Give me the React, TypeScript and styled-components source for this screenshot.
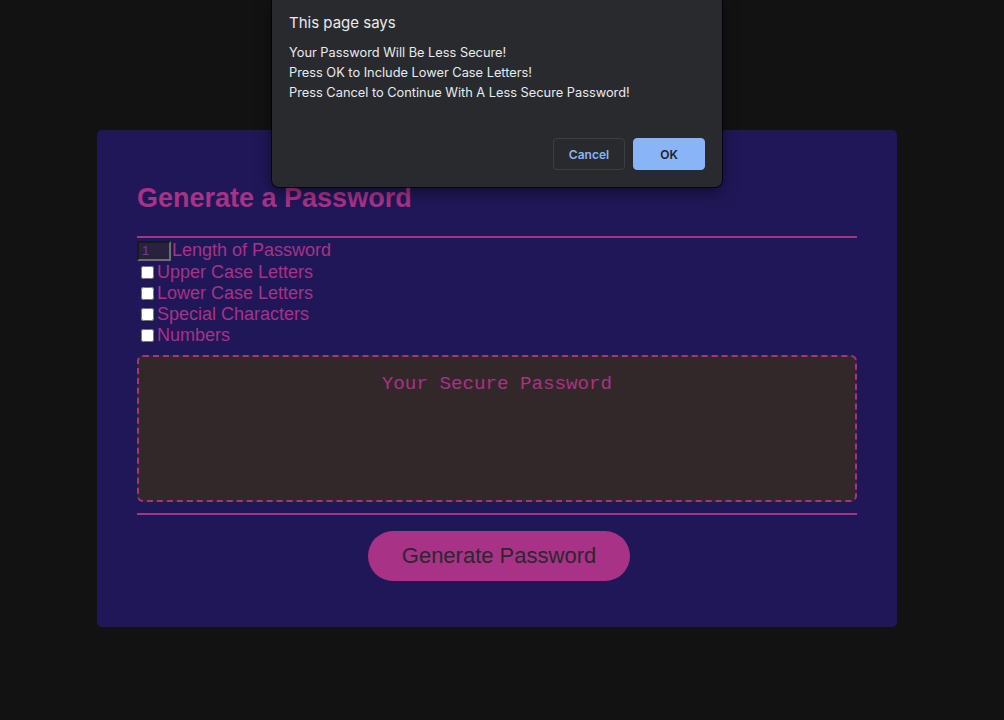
import React from "react";
import styled, { createGlobalStyle } from "styled-components";

const Global = createGlobalStyle`
  html, body { margin: 0; padding: 0; background: #121212; }
  body { font-family: "Liberation Sans", Arial, sans-serif; }
  * { box-sizing: border-box; }
`;

const Page = styled.div`
  position: relative;
  min-height: 720px;
  display: flex;
  justify-content: center;
  align-items: flex-start;
  padding: 130px 10px 0 0;
`;

const Card = styled.div`
  width: 800px;
  background: #201758;
  border-radius: 5px;
  padding: 20px 40px 30px;
`;

const Header = styled.div`
  padding-top: 33px;
`;

const Title = styled.h2`
  margin: 0 0 22px;
  font-size: 27px;
  line-height: 31px;
  font-weight: 700;
  color: #a83286;
`;

const Rule = styled.div`
  height: 2px;
  background: #a83286;
`;

const Body = styled.div`
  padding-top: 1px;
`;

const Row = styled.label<{ $tall?: boolean }>`
  display: flex;
  align-items: center;
  height: ${(p) => (p.$tall ? "23px" : "21px")};
  font-size: 18px;
  line-height: 21px;
  color: #a83286;
`;

const NumberBox = styled.input`
  width: 34px;
  height: 20px;
  margin: 0 1px 0 0;
  padding: 0 3px;
  border: 2px inset #6e6e6e;
  background: #28223f;
  color: #7b3a86;
  font-family: "Liberation Sans", Arial, sans-serif;
  font-size: 13px;
  outline: none;
  -moz-appearance: textfield;
  &::-webkit-inner-spin-button,
  &::-webkit-outer-spin-button { -webkit-appearance: none; margin: 0; }
`;

const Check = styled.input`
  width: 13px;
  height: 13px;
  margin: 3px 3px 3px 4px;
`;

const Output = styled.textarea`
  display: block;
  width: 100%;
  height: 147px;
  margin: 9px 0 11px;
  padding: 16px 15px 84px;
  border: 2px dashed #a83286;
  border-radius: 6px;
  background: #332829;
  color: #a83286;
  font-family: "Liberation Mono", "Courier New", monospace;
  font-size: 19.2px;
  text-align: center;
  resize: none;
  overflow: hidden;
  outline: none;
  &::placeholder { color: #a83286; opacity: 1; }
`;

const Footer = styled.div`
  text-align: center;
`;

const GenerateButton = styled.button`
  display: inline-block;
  margin: 16px 16px 16px 20px;
  padding: 14px 34px;
  border: none;
  border-radius: 25px;
  background: #a83286;
  color: #2b2630;
  font-family: "Liberation Sans", Arial, sans-serif;
  font-size: 22px;
  line-height: 22px;
  cursor: pointer;
`;

const Dialog = styled.div`
  position: absolute;
  left: 272px;
  top: 0;
  width: 450px;
  height: 187px;
  display: flex;
  flex-direction: column;
  padding: 13px 17px 17px;
  background: #292a2d;
  border-radius: 0 0 7px 7px;
  box-shadow: 0 0 0 1px rgba(0, 0, 0, 0.7), 0 4px 16px rgba(0, 0, 0, 0.5);
  font-family: Inter, "Liberation Sans", sans-serif;
  color: #e8eaed;
`;

const DialogTitle = styled.div`
  font-size: 15px;
  line-height: 20px;
  color: #e8eaed;
`;

const DialogText = styled.div`
  margin-top: 10px;
  font-size: 12.8px;
  line-height: 20px;
  color: #e8eaed;
`;

const DialogButtons = styled.div`
  margin-top: auto;
  display: flex;
  justify-content: flex-end;
  gap: 8px;
`;

const DialogButton = styled.button<{ $primary?: boolean }>`
  width: 72px;
  height: 32px;
  border-radius: 4px;
  font-family: Inter, "Liberation Sans", sans-serif;
  font-size: 12px;
  font-weight: 600;
  border: 1px solid ${(p) => (p.$primary ? "#8ab4f8" : "#3c3e42")};
  background: ${(p) => (p.$primary ? "#8ab4f8" : "transparent")};
  color: ${(p) => (p.$primary ? "#202124" : "#8ab4f8")};
`;

export default function App() {
  return (
    <>
      <Global />
      <Page>
        <Card>
          <Header>
            <Title>Generate a Password</Title>
            <Rule />
          </Header>
          <Body>
            <Row $tall>
              <NumberBox type="number" defaultValue={1} />
              Length of Password
            </Row>
            <Row>
              <Check type="checkbox" />
              Upper Case Letters
            </Row>
            <Row>
              <Check type="checkbox" />
              Lower Case Letters
            </Row>
            <Row>
              <Check type="checkbox" />
              Special Characters
            </Row>
            <Row>
              <Check type="checkbox" />
              Numbers
            </Row>
            <Output readOnly placeholder="Your Secure Password" />
          </Body>
          <Footer>
            <Rule />
            <GenerateButton>Generate Password</GenerateButton>
          </Footer>
        </Card>
        <Dialog>
          <DialogTitle>This page says</DialogTitle>
          <DialogText>
            Your Password Will Be Less Secure!
            <br />
            Press OK to Include Lower Case Letters!
            <br />
            Press Cancel to Continue With A Less Secure Password!
          </DialogText>
          <DialogButtons>
            <DialogButton>Cancel</DialogButton>
            <DialogButton $primary>OK</DialogButton>
          </DialogButtons>
        </Dialog>
      </Page>
    </>
  );
}
